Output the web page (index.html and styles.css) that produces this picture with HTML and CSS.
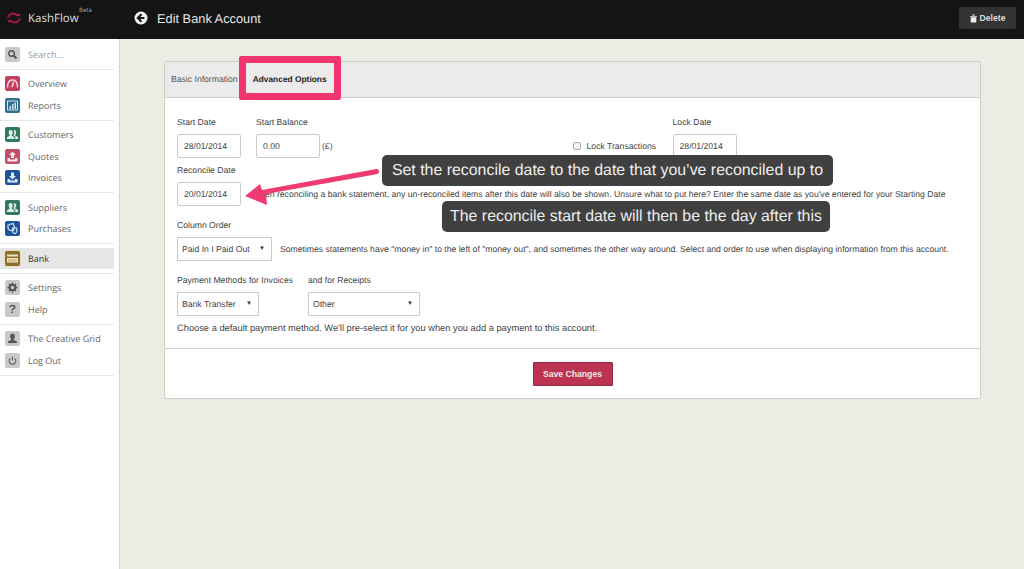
FILE: index.html
```html
<!DOCTYPE html>
<html lang="en">
<head>
    <meta charset="UTF-8">
    <title>Edit Bank Account</title>
    <link rel="stylesheet" href="styles.css">
</head>
<body>
    <header class="topbar">
        <div class="brand">
            <svg class="brand-logo" viewBox="0 0 14 12" width="14" height="12"><path d="M1 5.500C2 2 6 .5 9 2.500L11 3.500 13 2.500M13 6.500C12 10 8 11.500 5 9.500L3 8.500 1 9.500" fill="none" stroke="#a81f3d" stroke-width="2"/></svg>
            <span class="brand-name">KashFlow</span>
            <span class="brand-beta">Beta</span>
        </div>
        <svg class="back-icon" viewBox="0 0 14 14" width="14" height="14"><circle cx="7" cy="7" r="6.500" fill="#f2f2f2"/><path d="M7.500 3.200L3.800 7l3.700 3.800M4.200 7h6.200" fill="none" stroke="#141414" stroke-width="2"/></svg>
        <h1 class="page-title">Edit Bank Account</h1>
        <button class="delete-btn">
            <svg viewBox="0 0 8 9" width="7" height="9"><path d="M0 1.500h8v1H0zM2.500 0h3v1h-3zM.8 3h6.400v6H.8z" fill="#eee"/></svg>
            Delete
        </button>
    </header>

    <div class="layout">
        <nav class="sidebar">
            <div class="nav-group">
                <a class="nav-item search"><span class="tile grey"><svg viewBox="0 0 15 15"><circle cx="6.500" cy="6.500" r="2.800" fill="none" stroke="#555" stroke-width="1.400"/><path d="M8.500 8.500l3 3" stroke="#555" stroke-width="1.800"/></svg></span>Search...</a>
            </div>
            <div class="nav-group">
                <a class="nav-item"><span class="tile rose"><svg viewBox="0 0 15 15"><path d="M2.500 11.500C2.500 6 5 4 7.500 4s5 2 5 7.500M7 11l1.500-5" fill="none" stroke="#f6d5dc" stroke-width="1.500"/></svg></span>Overview</a>
                <a class="nav-item"><span class="tile teal"><svg viewBox="0 0 15 15"><path d="M2.500 3h10v9h-10z" fill="none" stroke="#d5e6ee"/><path d="M4.500 8H6v3H4.500zM7 6h1.500v5H7zM9.500 4.500H11V11H9.500z" fill="#d5e6ee"/></svg></span>Reports</a>
            </div>
            <div class="nav-group">
                <a class="nav-item"><span class="tile green"><svg viewBox="0 0 15 15"><use href="#people"/></svg></span>Customers</a>
                <a class="nav-item"><span class="tile pink"><svg viewBox="0 0 15 15"><use href="#tray-up"/></svg></span>Quotes</a>
                <a class="nav-item"><span class="tile blue"><svg viewBox="0 0 15 15"><use href="#tray-down"/></svg></span>Invoices</a>
            </div>
            <div class="nav-group">
                <a class="nav-item"><span class="tile green"><svg viewBox="0 0 15 15"><use href="#people"/></svg></span>Suppliers</a>
                <a class="nav-item"><span class="tile blue"><svg viewBox="0 0 15 15"><path d="M3 4l5-1.500L9.500 6l-1 3.500H5L3 7.500z" fill="none" stroke="#cfe0f5" stroke-width="1.200"/><path d="M7.500 7h4l.5 3-1.500 2.500H9l-1.500-2z" fill="none" stroke="#cfe0f5" stroke-width="1.200"/></svg></span>Purchases</a>
            </div>
            <div class="nav-group">
                <a class="nav-item active"><span class="tile gold"><svg viewBox="0 0 15 15"><path d="M2 3.500h11v8H2z" fill="#efe3bd"/><path d="M2 5.500h11V7H2z" fill="#8a6f30"/><path d="M3 8.500h9v1.800H3z" fill="#c9b377"/></svg></span>Bank</a>
            </div>
            <div class="nav-group">
                <a class="nav-item"><span class="tile grey"><svg viewBox="0 0 15 15"><circle cx="7.500" cy="7.500" r="2.800" fill="none" stroke="#555" stroke-width="2"/><path d="M7.500 2.500v2M7.500 10.500v2M2.500 7.500h2M10.500 7.500h2M4 4l1.400 1.400M9.600 9.600L11 11M11 4L9.600 5.400M5.400 9.600L4 11" stroke="#555" stroke-width="1.500"/></svg></span>Settings</a>
                <a class="nav-item"><span class="tile grey tile-text">?</span>Help</a>
            </div>
            <div class="nav-group">
                <a class="nav-item"><span class="tile grey"><svg viewBox="0 0 15 15"><path d="M7.500 2.500c1.600 0 2.400 1.200 2.400 2.800 0 1.300-.6 2.300-1.100 2.800v1l3.200 1.500v1.400H3v-1.400l3.200-1.500v-1c-.5-.5-1.100-1.500-1.100-2.800 0-1.600.8-2.800 2.400-2.800z" fill="#555"/></svg></span>The Creative Grid</a>
                <a class="nav-item"><span class="tile grey"><svg viewBox="0 0 15 15"><path d="M5.300 5.500a3.300 3.300 0 1 0 4.400 0" fill="none" stroke="#666" stroke-width="1.200"/><path d="M7.500 3.500v4" stroke="#666" stroke-width="1.200"/></svg></span>Log Out</a>
            </div>
        </nav>

        <main class="content">
            <section class="panel">
                <div class="tabs">
                    <a class="tab">Basic Information</a>
                    <a class="tab current">Advanced Options</a>
                </div>

                <form class="panel-body">
                    <div class="row">
                        <div class="field">
                            <label>Start Date</label>
                            <input class="text-input" type="text" value="28/01/2014">
                        </div>
                        <div class="field">
                            <label>Start Balance</label>
                            <div class="inline">
                                <input class="text-input" type="text" value="0.00">
                                <span class="unit">(£)</span>
                            </div>
                        </div>
                        <div class="lock-check">
                            <span class="checkbox"></span>
                            <span>Lock Transactions</span>
                        </div>
                        <div class="field">
                            <label>Lock Date</label>
                            <input class="text-input" type="text" value="28/01/2014">
                        </div>
                    </div>

                    <div class="field spaced-sm">
                        <label>Reconcile Date</label>
                        <div class="inline">
                            <input class="text-input" type="text" value="20/01/2014">
                            <span class="hint hint-wide">When reconciling a bank statement, any un-reconciled items after this date will also be shown. Unsure what to put here? Enter the same date as you've entered for your Starting Date</span>
                        </div>
                    </div>

                    <div class="field spaced">
                        <label>Column Order</label>
                        <div class="inline">
                            <div class="select order-select">Paid In I Paid Out<i>▼</i></div>
                            <span class="hint">Sometimes statements have "money in" to the left of "money out", and sometimes the other way around. Select and order to use when displaying information from this account.</span>
                        </div>
                    </div>

                    <div class="row spaced">
                        <div class="field payment-col">
                            <label>Payment Methods for Invoices</label>
                            <div class="select invoice-select">Bank Transfer<i>▼</i></div>
                        </div>
                        <div class="field">
                            <label>and for Receipts</label>
                            <div class="select receipt-select">Other<i>▼</i></div>
                        </div>
                    </div>

                    <p class="note">Choose a default payment method. We'll pre-select it for you when you add a payment to this account.</p>
                </form>

                <div class="panel-footer">
                    <button class="save-btn">Save Changes</button>
                </div>

                <!-- annotations on top of the form -->
                <div class="tab-highlight"></div>
                <div class="callout callout-one">Set the reconcile date to the date that you’ve reconciled up to</div>
                <div class="callout callout-two">The reconcile start date will then be the day after this</div>
                <svg class="arrow" viewBox="0 0 140 44" width="140" height="44"><path d="M0 31L15 19 17 25 131 4C133 3.700 134 5 134 6.500 134 8 133 8.800 131.500 9.200L21 29 22 40z" fill="#ef3a72"/></svg>
            </section>
        </main>
    </div>

    <svg class="defs" width="0" height="0">
        <defs>
            <g id="people" fill="#e3f1ea"><path d="M5.500 3c1.500 0 2.200 1 2.200 2.400 0 1.100-.5 1.900-1 2.400v.9l2.800 1.500V12H2v-1.800l2.700-1.500v-.9c-.5-.5-1-1.300-1-2.400C3.700 4 4.200 3 5.500 3z"/><path d="M9 3c1.500 0 2.200 1 2.200 2.400 0 1-.5 1.800-1 2.300v.8l2.800 1.500V12h-2.600V9.700L8.300 8.200c.6-.7 1-1.700 1-2.800 0-.8-.2-1.500-.6-2.300z"/></g>
            <g id="tray-up" fill="#f8e3e7"><path d="M7.500 2.500L11 6H9v3H6V6H4z"/><path d="M2.500 9H5v1.500h5V9h2.500v3.500h-10z"/></g>
            <g id="tray-down" fill="#dfeaf7"><path d="M7.500 9.500L4 6h2V2.500h3V6h2z"/><path d="M2.500 9H5v1.500h5V9h2.500v3.500h-10z"/></g>
        </defs>
    </svg>
</body>
</html>
```

FILE: styles.css
```css
* {
    box-sizing: border-box;
}
html, body {
    height: 100%;
}
body {
    margin: 0;
    font-family: "Liberation Sans", Arial, sans-serif;
    font-size: 8.65px;
    color: #333;
    background: #ecebe4;
    overflow: hidden;
    text-rendering: geometricPrecision;
}
.defs {
    position: absolute;
}

/* top bar */
.topbar {
    display: flex;
    align-items: center;
    height: 39px;
    padding-bottom: 3px;
    background: #141414;
    color: #eee;
}
.brand {
    display: flex;
    align-items: center;
    position: relative;
    width: 134px;
    padding-left: 7px;
}
.brand-name {
    margin-left: 7px;
    font-family: "Open Sans", sans-serif;
    font-size: 11.500px;
    line-height: 9px;
    color: #ddd;
}
.brand-beta {
    position: absolute;
    left: 79px;
    top: -4px;
    font-family: "Open Sans", sans-serif;
    font-size: 6px;
    line-height: 5px;
    color: #aaa;
}
.page-title {
    margin: 0 0 0 9px;
    font-size: 12.800px;
    font-weight: normal;
    color: #e6e6e6;
}
.delete-btn {
    display: flex;
    align-items: center;
    justify-content: center;
    gap: 3px;
    width: 57px;
    height: 22px;
    margin: 0 8px 0 auto;
    padding: 0;
    border: none;
    border-radius: 2px;
    background: #333;
    color: #ddd;
    font-family: inherit;
    font-size: 8.650px;
    font-weight: bold;
}

/* sidebar */
.layout {
    display: flex;
    height: 530px;
}
.sidebar {
    flex: none;
    width: 120px;
    padding: 4.500px 5px 0 0;
    background: #fff;
    border-right: 1px solid #d4d3cc;
}
.nav-group {
    padding: 3.500px 0;
    border-bottom: 1px solid #e6e6e6;
}
.nav-group:first-child {
    padding: 0 0 3.500px;
}
.nav-item {
    display: flex;
    align-items: center;
    height: 21.500px;
    padding-left: 5px;
    font-family: "Open Sans", sans-serif;
    font-size: 9px;
    color: #666;
}
.nav-item.search {
    color: #999;
}
.nav-item.active {
    background: #e6e6e6;
    color: #333;
}
.tile {
    flex: none;
    display: block;
    width: 15px;
    height: 15px;
    margin-right: 8px;
    border-radius: 2px;
}
.tile svg {
    display: block;
    width: 15px;
    height: 15px;
}
.tile-text {
    font-family: "Liberation Sans", sans-serif;
    font-size: 12px;
    font-weight: bold;
    line-height: 15px;
    text-align: center;
    color: #555;
}
.grey { background: #c9c9c9; }
.rose { background: #c33f5f; }
.teal { background: #2f6f8f; }
.green { background: #2f7a5e; }
.pink { background: #bd5068; }
.blue { background: #20549a; }
.gold { background: #8a6f30; box-shadow: 0 0 0 1px #eadfb8; }

/* panel */
.content {
    flex: 1;
    min-width: 0;
    padding: 22px 43px 0 44px;
}
.panel {
    position: relative;
    height: 338px;
    background: #fff;
    border: 1px solid #cfcfc9;
    border-radius: 2px;
}
.tabs {
    display: flex;
    align-items: center;
    gap: 15px;
    height: 36px;
    padding: 0 0 1px 6px;
    background: #ebebeb;
    border-bottom: 1px solid #cfcfcf;
}
.tab {
    color: #555;
}
.tab.current {
    font-size: 8.400px;
    font-weight: bold;
    color: #222;
}
.panel-body {
    height: 250px;
    padding: 19px 12px 0;
}
.row {
    display: flex;
    gap: 15px;
}
.field label {
    display: block;
    height: 11px;
    margin-bottom: 6px;
    line-height: 11px;
    white-space: nowrap;
    color: #444;
}
.inline {
    display: flex;
    align-items: center;
}
.text-input {
    width: 64px;
    height: 24px;
    padding: 0 6px;
    border: 1px solid #ccc;
    border-radius: 2px;
    background: #fff;
    color: #444;
    font-family: inherit;
    font-size: 8.650px;
    text-rendering: geometricPrecision;
}
.unit {
    margin-left: 2px;
    color: #555;
}
.lock-check {
    display: flex;
    align-items: center;
    gap: 6px;
    width: 85px;
    height: 24px;
    margin: 17px 0 0 225px;
    white-space: nowrap;
    color: #444;
}
.checkbox {
    width: 8px;
    height: 8px;
    border: 1px solid #aaa;
    border-radius: 2px;
    background: #f4f4f4;
}
.spaced-sm {
    margin-top: 7px;
}
.spaced {
    margin-top: 14px;
}
.hint {
    margin-left: 8px;
    white-space: nowrap;
    color: #444;
}
.hint-wide {
    margin-left: 11px;
}
.select {
    display: flex;
    align-items: center;
    justify-content: space-between;
    height: 24px;
    padding: 0 6px 0 4px;
    border: 1px solid #ccc;
    background: #fff;
    color: #444;
}
.select i {
    font-size: 6px;
    font-style: normal;
    color: #333;
}
.order-select {
    width: 95px;
}
.invoice-select {
    width: 82px;
}
.receipt-select {
    width: 112px;
}
.payment-col {
    width: 116px;
}
.note {
    margin: 7px 0 0;
    font-size: 9.300px;
    line-height: 11px;
    color: #444;
}
.panel-footer {
    display: flex;
    justify-content: center;
    align-items: flex-start;
    height: 50px;
    padding-top: 13px;
    border-top: 1px solid #cfcfcf;
}
.save-btn {
    width: 80px;
    height: 24px;
    border: 1px solid #8e2740;
    border-radius: 1px;
    background: #bd3352;
    color: #f5e6e9;
    font-family: inherit;
    font-size: 8.650px;
    font-weight: bold;
}

/* annotations */
.tab-highlight {
    position: absolute;
    left: 74px;
    top: -6px;
    width: 102px;
    height: 44px;
    border: 7px solid #f0356f;
    border-radius: 2px;
}
.callout {
    position: absolute;
    height: 31px;
    border-radius: 5px;
    background: #404040;
    color: #eee;
    font-size: 15.900px;
    line-height: 32px;
    text-align: center;
    white-space: nowrap;
}
.callout-one {
    left: 217px;
    top: 93px;
    width: 451px;
}
.callout-two {
    left: 277px;
    top: 139px;
    width: 388px;
}
.arrow {
    position: absolute;
    left: 80px;
    top: 103px;
}
```
